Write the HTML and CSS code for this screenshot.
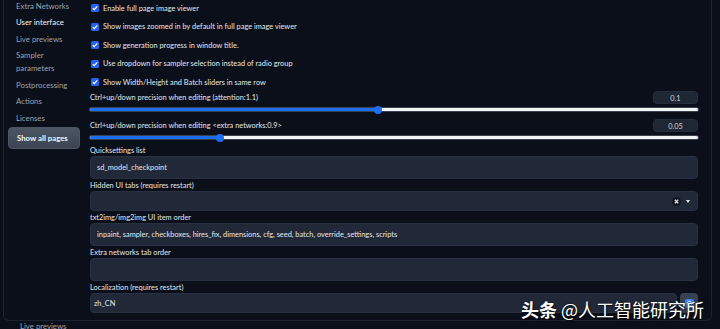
FILE: index.html
```html
<!DOCTYPE html>
<html lang="en">
<head>
    <meta charset="UTF-8">
    <title>Settings - User interface</title>
    <link rel="stylesheet" href="styles.css">
</head>
<body>
    <div class="frame">
        <nav class="sidebar">
            <a class="nav-item">Extra Networks</a>
            <a class="nav-item active">User interface</a>
            <a class="nav-item">Live previews</a>
            <a class="nav-item">Sampler parameters</a>
            <a class="nav-item">Postprocessing</a>
            <a class="nav-item">Actions</a>
            <a class="nav-item">Licenses</a>
            <button class="show-all">Show all pages</button>
        </nav>

        <main class="settings">
            <label class="check-row"><span class="checkbox"><svg viewBox="0 0 8 8"><path d="M1.8 4.2 L3.3 5.6 L6.2 2.4" /></svg></span>Enable full page image viewer</label>
            <label class="check-row"><span class="checkbox"><svg viewBox="0 0 8 8"><path d="M1.8 4.2 L3.3 5.6 L6.2 2.4" /></svg></span>Show images zoomed in by default in full page image viewer</label>
            <label class="check-row"><span class="checkbox"><svg viewBox="0 0 8 8"><path d="M1.8 4.2 L3.3 5.6 L6.2 2.4" /></svg></span>Show generation progress in window title.</label>
            <label class="check-row"><span class="checkbox"><svg viewBox="0 0 8 8"><path d="M1.8 4.2 L3.3 5.6 L6.2 2.4" /></svg></span>Use dropdown for sampler selection instead of radio group</label>
            <label class="check-row"><span class="checkbox"><svg viewBox="0 0 8 8"><path d="M1.8 4.2 L3.3 5.6 L6.2 2.4" /></svg></span>Show Width/Height and Batch sliders in same row</label>

            <div class="slider-block">
                <div class="slider-head">
                    <span>Ctrl+up/down precision when editing (attention:1.1)</span>
                    <span class="num-box">0.1</span>
                </div>
                <div class="track"><div class="fill" style="width: 47.4%"><span class="thumb"></span></div></div>
            </div>
            <div class="slider-block">
                <div class="slider-head">
                    <span>Ctrl+up/down precision when editing &lt;extra networks:0.9&gt;</span>
                    <span class="num-box">0.05</span>
                </div>
                <div class="track"><div class="fill" style="width: 21.4%"><span class="thumb"></span></div></div>
            </div>

            <div class="field first">
                <div class="field-label">Quicksettings list</div>
                <div class="textbox">sd_model_checkpoint</div>
            </div>
            <div class="field">
                <div class="field-label">Hidden UI tabs (requires restart)</div>
                <div class="dropdown">
                    <span class="dropdown-value"></span>
                    <span class="clear-btn"><svg viewBox="0 0 8 8"><path d="M2.5 2.5 L5.5 5.5 M5.5 2.5 L2.5 5.5" /></svg></span>
                    <span class="caret"></span>
                </div>
            </div>
            <div class="field">
                <div class="field-label">txt2img/img2img UI item order</div>
                <div class="textbox">inpaint, sampler, checkboxes, hires_fix, dimensions, cfg, seed, batch, override_settings, scripts</div>
            </div>
            <div class="field">
                <div class="field-label">Extra networks tab order</div>
                <div class="textbox"></div>
            </div>
            <div class="field">
                <div class="field-label">Localization (requires restart)</div>
                <div class="dropdown-row">
                    <div class="dropdown loc">
                        <span class="dropdown-value">zh_CN</span>
                    </div>
                    <button class="refresh-btn"><svg viewBox="0 0 12 12"><rect x="1" y="1" width="10" height="10" rx="2" fill="#3b82f6" /><path d="M3.5 6 A2.5 2.5 0 0 1 8 4.5 M8.5 6 A2.5 2.5 0 0 1 4 7.5" stroke="#fff" stroke-width="1" fill="none" /></svg></button>
                </div>
            </div>
        </main>
    </div>
    <div class="next-section">Live previews</div>

    <div class="watermark"><b>头条</b> @人工智能研究所</div>
</body>
</html>
```

FILE: styles.css
```css
body {
    margin: 0;
    background: #0b0f19;
    color: #e5e7eb;
    font-family: Lato, "Liberation Sans", sans-serif;
    font-size: 7.4px;
    overflow: hidden;
    height: 329px;
}
.frame {
    display: flex;
    gap: 10px;
    margin-left: 3px;
    width: 709px;
    height: 321px;
    box-sizing: border-box;
    padding: 0 13px 0 4px;
    border: 1px solid #1c2331;
    border-top: none;
    border-radius: 0 0 6px 6px;
}

/* sidebar */
.sidebar {
    width: 72px;
    flex-shrink: 0;
    display: flex;
    flex-direction: column;
    margin-top: -2px;
}
.nav-item {
    padding: 1.75px 6px 1.75px 8px;
    line-height: 13px;
    font-size: 7.8px;
    color: #9ca3af;
}
.nav-item.active {
    color: #f3f4f6;
}
.show-all {
    margin-top: 0;
    height: 22px;
    padding: 0 8px;
    text-align: left;
    font: inherit;
    font-size: 7.8px;
    font-weight: 700;
    color: #f3f4f6;
    background: linear-gradient(#4b5563, #3b4452);
    border: 1px solid #4b5563;
    border-radius: 4px;
}

/* main settings column */
.settings {
    flex: 1;
    display: flex;
    flex-direction: column;
    margin-top: -1px;
}
.check-row {
    display: flex;
    align-items: center;
    height: 18.5px;
    gap: 4px;
}
.checkbox {
    width: 8px;
    height: 8px;
    margin-left: 1px;
    border-radius: 1.5px;
    background: #2563eb;
    display: flex;
}
.checkbox svg {
    width: 8px;
    height: 8px;
    fill: none;
    stroke: #fff;
    stroke-width: 1.2;
}

.slider-block {
    display: flex;
    flex-direction: column;
    margin-top: 7.5px;
}
.check-row + .slider-block {
    margin-top: -1px;
}
.slider-head {
    display: flex;
    justify-content: space-between;
    align-items: center;
    height: 13px;
}
.num-box {
    width: 45px;
    height: 13px;
    line-height: 13px;
    text-align: center;
    background: #1f2735;
    border: 1px solid #252e3d;
    box-sizing: border-box;
    border-radius: 4px;
    color: #d1d5db;
}
.track {
    margin-top: 4.5px;
    height: 3px;
    background: #f3f4f6;
    border-radius: 2px;
    box-shadow: 0 0 0 1px #3a404c;
}
.fill {
    position: relative;
    height: 100%;
    background: #1d6ff2;
    border-radius: 2px 0 0 2px;
}
.thumb {
    position: absolute;
    right: -4px;
    top: -2.5px;
    width: 8px;
    height: 8px;
    border-radius: 50%;
    background: #1d6ff2;
}

/* text fields */
.field {
    display: flex;
    flex-direction: column;
    margin-top: 2px;
}
.field.first {
    margin-top: 7px;
}
.field-label {
    height: 10px;
    line-height: 10px;
}
.textbox, .dropdown {
    height: 23px;
    box-sizing: border-box;
    display: flex;
    align-items: center;
    padding: 0 6px;
    background: #212938;
    border: 1px solid #283142;
    border-radius: 4px;
}
.dropdown {
    height: 20px;
    padding: 0 7px 0 3px;
    gap: 3px;
}
.dropdown-value {
    flex: 1;
}
.clear-btn {
    width: 9px;
    height: 9px;
    border-radius: 50%;
    background: #111622;
    display: flex;
}
.clear-btn svg {
    width: 9px;
    height: 9px;
    stroke: #d1d5db;
    stroke-width: 1.3;
}
.caret {
    width: 0;
    height: 0;
    border-left: 2.5px solid transparent;
    border-right: 2.5px solid transparent;
    border-top: 3px solid #e5e7eb;
    margin-left: 2px;
}
.dropdown-row {
    display: flex;
    gap: 3px;
}
.dropdown.loc {
    flex: 1;
}
.refresh-btn {
    width: 18px;
    height: 20px;
    padding: 0;
    display: flex;
    align-items: center;
    justify-content: center;
    background: #374151;
    border: none;
    border-radius: 4px;
}
.refresh-btn svg {
    width: 11px;
    height: 11px;
}

.next-section {
    padding-left: 20px;
    line-height: 10px;
    font-size: 7.8px;
    color: #9ca3af;
}

/* overlay watermark */
.watermark {
    position: absolute;
    left: 521px;
    top: 296px;
    font-family: "Noto Sans CJK SC", sans-serif;
    font-size: 18px;
    color: #fff;
    text-shadow: 0 0 2px rgba(0, 0, 0, 0.8), 1px 1px 1px rgba(0, 0, 0, 0.6);
    white-space: nowrap;
}
```
